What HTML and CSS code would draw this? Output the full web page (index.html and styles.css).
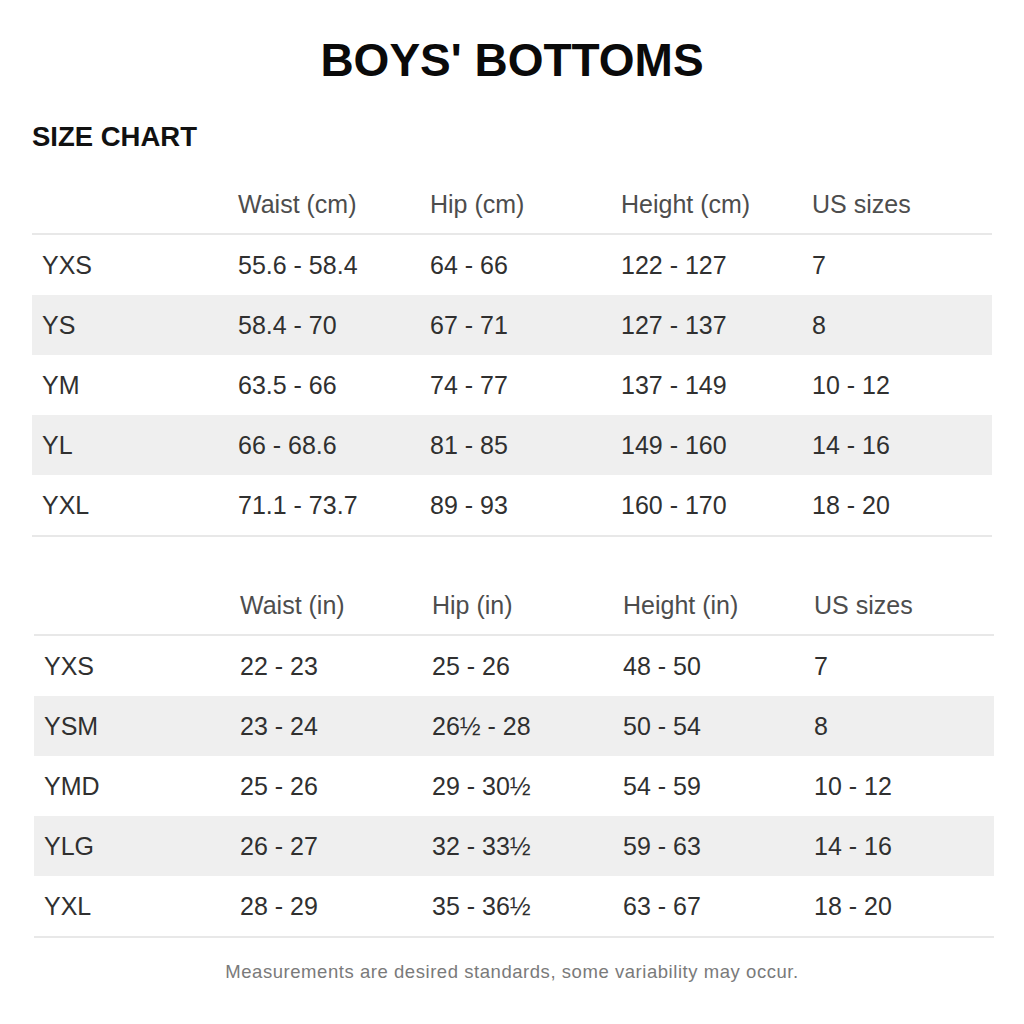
FILE: index.html
```html
<!DOCTYPE html>
<html lang="en">
<head>
<meta charset="utf-8">
<title>Boys' Bottoms Size Chart</title>
<link rel="stylesheet" href="styles.css">
</head>
<body>
<main class="page">
  <h1 class="title">BOYS' BOTTOMS</h1>
  <h2 class="subtitle">SIZE CHART</h2>

  <section class="chart">
    <div class="row head"><span></span><span>Waist (cm)</span><span>Hip (cm)</span><span>Height (cm)</span><span>US sizes</span></div>
    <div class="row"><span>YXS</span><span>55.6 - 58.4</span><span>64 - 66</span><span>122 - 127</span><span>7</span></div>
    <div class="row alt"><span>YS</span><span>58.4 - 70</span><span>67 - 71</span><span>127 - 137</span><span>8</span></div>
    <div class="row"><span>YM</span><span>63.5 - 66</span><span>74 - 77</span><span>137 - 149</span><span>10 - 12</span></div>
    <div class="row alt"><span>YL</span><span>66 - 68.6</span><span>81 - 85</span><span>149 - 160</span><span>14 - 16</span></div>
    <div class="row"><span>YXL</span><span>71.1 - 73.7</span><span>89 - 93</span><span>160 - 170</span><span>18 - 20</span></div>
  </section>

  <section class="chart chart-in">
    <div class="row head"><span></span><span>Waist (in)</span><span>Hip (in)</span><span>Height (in)</span><span>US sizes</span></div>
    <div class="row"><span>YXS</span><span>22 - 23</span><span>25 - 26</span><span>48 - 50</span><span>7</span></div>
    <div class="row alt"><span>YSM</span><span>23 - 24</span><span>26½ - 28</span><span>50 - 54</span><span>8</span></div>
    <div class="row"><span>YMD</span><span>25 - 26</span><span>29 - 30½</span><span>54 - 59</span><span>10 - 12</span></div>
    <div class="row alt"><span>YLG</span><span>26 - 27</span><span>32 - 33½</span><span>59 - 63</span><span>14 - 16</span></div>
    <div class="row"><span>YXL</span><span>28 - 29</span><span>35 - 36½</span><span>63 - 67</span><span>18 - 20</span></div>
  </section>

  <p class="note">Measurements are desired standards, some variability may occur.</p>
</main>
</body>
</html>
```

FILE: styles.css
```css
html, body {
  margin: 0;
  padding: 0;
  background: #ffffff;
}

body {
  font-family: "Liberation Sans", Arial, sans-serif;
  color: #303030;
}

.page {
  padding: 34px 32px 0 32px;
}

.title {
  margin: 0;
  font-size: 46px;
  line-height: 52px;
  font-weight: 700;
  text-align: center;
  color: #0a0a0a;
}

.subtitle {
  margin: 35px 0 0 0;
  font-size: 27.5px;
  line-height: 32px;
  font-weight: 700;
  color: #111111;
}

.chart {
  margin-top: 21px;
  width: 960px;
  border-bottom: 2px solid #e8e8e8;
}

.chart-in {
  margin-top: 38px;
  margin-left: 2px;
}

.row {
  display: grid;
  grid-template-columns: 196px 192px 191px 191px 1fr;
  align-items: center;
  height: 60px;
  font-size: 25px;
  line-height: 28px;
}

.row span {
  padding-left: 10px;
  white-space: nowrap;
}

.head {
  height: 59px;
  border-bottom: 2px solid #e8e8e8;
  color: #4d4d4d;
}

.alt {
  background: #efefef;
}

.note {
  margin: 23px 0 0 0;
  text-align: center;
  font-size: 18.5px;
  line-height: 22px;
  letter-spacing: 0.55px;
  color: #7a7a7a;
}
```
